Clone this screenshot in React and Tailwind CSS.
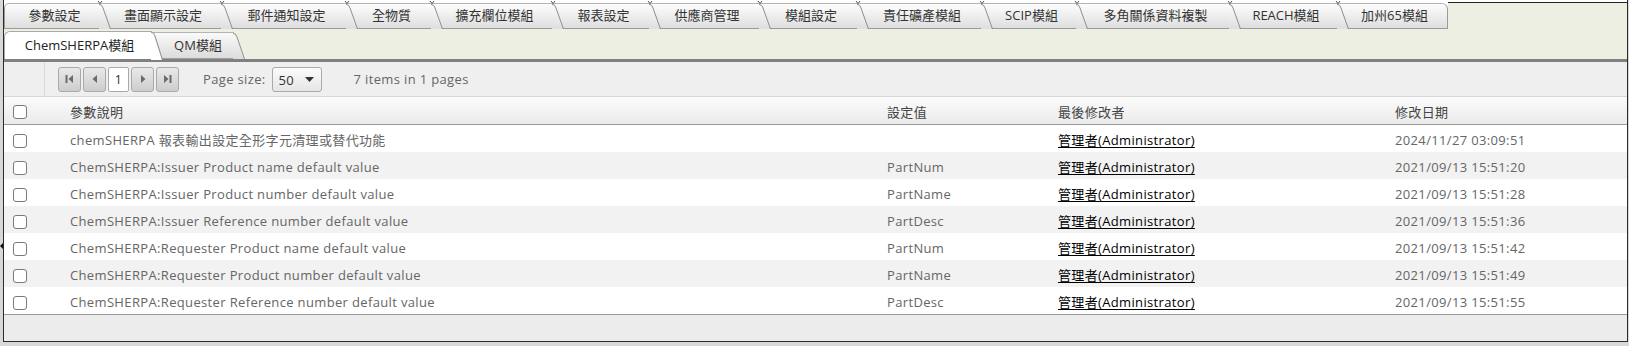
import React from 'react'

const topTabs = [
  { label: '參數設定', w: 'w-[96px]', first: true },
  { label: '畫面顯示設定', w: 'w-[122px]' },
  { label: '郵件通知設定', w: 'w-[125px]' },
  { label: '全物質', w: 'w-[85px]' },
  { label: '擴充欄位模組', w: 'w-[121px]' },
  { label: '報表設定', w: 'w-[97px]' },
  { label: '供應商管理', w: 'w-[110px]' },
  { label: '模組設定', w: 'w-[98px]' },
  { label: '責任礦產模組', w: 'w-[124px]' },
  { label: 'SCIP模組', w: 'w-[95px]' },
  { label: '多角關係資料複製', w: 'w-[153px]' },
  { label: 'REACH模組', w: 'w-[108px]' },
  { label: '加州65模組', w: 'w-[110px]', last: true },
]

const rows = [
  { desc: 'chemSHERPA 報表輸出設定全形字元清理或替代功能', val: '', date: '2024/11/27 03:09:51' },
  { desc: 'ChemSHERPA:Issuer Product name default value', val: 'PartNum', date: '2021/09/13 15:51:20' },
  { desc: 'ChemSHERPA:Issuer Product number default value', val: 'PartName', date: '2021/09/13 15:51:28' },
  { desc: 'ChemSHERPA:Issuer Reference number default value', val: 'PartDesc', date: '2021/09/13 15:51:36' },
  { desc: 'ChemSHERPA:Requester Product name default value', val: 'PartNum', date: '2021/09/13 15:51:42' },
  { desc: 'ChemSHERPA:Requester Product number default value', val: 'PartName', date: '2021/09/13 15:51:49' },
  { desc: 'ChemSHERPA:Requester Reference number default value', val: 'PartDesc', date: '2021/09/13 15:51:55' },
]

// slanted right edge of a tab, drawn over the next tab
const Slant = ({ h, id, top, bottom, white, tick }) => (
  <svg className="absolute left-full top-0 z-10 overflow-visible" width="12" height={h}>
    <defs>
      <linearGradient id={id} x1="0" y1="0" x2="0" y2="1">
        <stop offset="0" stopColor={white ? '#ffffff' : top} />
        <stop offset="1" stopColor={white ? '#ffffff' : bottom} />
      </linearGradient>
    </defs>
    <polygon points={`-1,0 0,0 10,${h} -1,${h}`} fill={`url(#${id})`} />
    <path d={`M-1 0.5 Q2 0 3 4 L10.5 ${h}`} fill="none" stroke="#8f8f8f" strokeWidth="1" />
    {tick && <path d="M-2 -3 L0 -0.5 L2 -3" fill="none" stroke="#4a5a40" strokeWidth="1" />}
  </svg>
)

const TopTab = ({ tab, i }) => (
  <div className={`relative ${tab.w} h-[26px] shrink-0 flex items-center justify-center border-t border-b border-t-[#b4b4b4] border-b-[#9a9a9a] bg-linear-to-b from-[#fdfdfd] to-[#dedede] text-[#333] ${tab.first ? 'border-l border-l-[#9a9a9a] rounded-tl-[5px]' : ''} ${tab.last ? 'border-r border-r-[#9a9a9a] rounded-tr-[6px]' : ''}`}>
    <span className="pl-[4px]">{tab.label}</span>
    {!tab.last && <Slant h={25} id={`tt${i}`} top="#fdfdfd" bottom="#dedede" tick />}
  </div>
)

const Checkbox = () => (
  <span className="block w-[14px] h-[14px] rounded-[3px] border border-[#7a7a7a] bg-white" />
)

const PagerBtn = ({ w, children }) => (
  <div className={`${w} h-[25px] flex items-center justify-center rounded-[3px] border border-[#aaaaaa] bg-linear-to-b from-[#e9e9e9] to-[#cdcdcd]`}>
    {children}
  </div>
)

const App = () => {
  return (
    <div className="relative w-[1629px] h-[346px] bg-[#d8d8d8] pl-[3px] pr-px pb-[4px] overflow-hidden font-['Open_Sans','Noto_Sans_CJK_TC',sans-serif] text-[13px]">
      {/* splitter handle */}
      <div className="absolute left-0 top-[243px] w-0 h-0 border-y-[3px] border-y-transparent border-r-[3px] border-r-[#111]" />

      <div className="h-full flex flex-col border-l border-r border-b border-[#2a2a2a]">
        {/* top tab strip */}
        <div className="h-[29px] shrink-0 flex bg-white">
          <div className="flex items-end">
            {topTabs.map((t, i) => <TopTab key={t.label} tab={t} i={i} />)}
          </div>
          <div className="flex-1 mt-[2px] border-t border-[#222] bg-[#eeefe3]" />
        </div>

        {/* module tab strip */}
        <div className="h-[30px] shrink-0 flex items-end bg-[#eeefe3]">
          <div className="relative w-[148px] h-[28px] flex items-center justify-center bg-white border-t border-l border-[#a9a9a9] rounded-tl-[6px] text-[#222]">
            <span className="pl-[2px]">ChemSHERPA模組</span>
            <Slant h={28} id="mt0" white />
          </div>
          <div className="relative w-[82px] h-[27px] flex items-center justify-center border-t border-b border-t-[#b4b4b4] border-b-[#a0a0a0] bg-linear-to-b from-[#fafafa] to-[#dcdcdc] text-[#333]">
            <span className="pl-[10px]">QM模組</span>
            <Slant h={26} id="mt1" top="#fafafa" bottom="#dcdcdc" />
          </div>
        </div>

        <div className="h-[3px] shrink-0 bg-[#808080]" />

        {/* grid */}
        <div className="flex-1 flex flex-col bg-white tracking-[0.35px]">
          {/* pager */}
          <div className="h-[35px] shrink-0 flex items-center bg-[#efefef] border-b border-[#d6d6d6]">
            <div className="w-[41px] h-full border-r border-[#d9d9d9]" />
            <div className="ml-[13px] flex items-center gap-[2px]">
              <PagerBtn w="w-[23px]">
                <svg width="9" height="10" viewBox="0 0 9 10"><rect x="0.5" y="1" width="2" height="8" fill="#6b6b6b" /><polygon points="8,1 3.5,5 8,9" fill="#6b6b6b" /></svg>
              </PagerBtn>
              <PagerBtn w="w-[23px]">
                <svg width="6" height="10" viewBox="0 0 6 10"><polygon points="5,1 0.5,5 5,9" fill="#6b6b6b" /></svg>
              </PagerBtn>
              <div className="w-[21px] h-[25px] flex items-center justify-center pt-[2px] border border-[#aaaaaa] rounded-[2px] bg-white text-[#333]">1</div>
              <PagerBtn w="w-[23px]">
                <svg width="6" height="10" viewBox="0 0 6 10"><polygon points="1,1 5.5,5 1,9" fill="#6b6b6b" /></svg>
              </PagerBtn>
              <PagerBtn w="w-[23px]">
                <svg width="9" height="10" viewBox="0 0 9 10"><polygon points="1,1 5.5,5 1,9" fill="#6b6b6b" /><rect x="6.5" y="1" width="2" height="8" fill="#6b6b6b" /></svg>
              </PagerBtn>
            </div>
            <span className="ml-[24px] pt-[2px] text-[#666]">Page size:</span>
            <div className="ml-[6px] w-[50px] h-[25px] flex items-center justify-between pl-[6px] pr-[7px] rounded-[3px] border border-[#aaaaaa] bg-linear-to-b from-[#fbfbfb] to-[#e6e6e6] text-[#333]">
              <span className="pt-[3px]">50</span>
              <svg width="9" height="5" viewBox="0 0 9 5"><polygon points="0,0 9,0 4.5,5" fill="#333" /></svg>
            </div>
            <span className="ml-[32px] pt-[2px] text-[#666]">7 items in 1 pages</span>
          </div>

          {/* header */}
          <div className="h-[28px] shrink-0 flex items-center pt-[2px] border-b border-[#9a9a9a] bg-linear-to-b from-[#fbfbfb] to-[#ebebeb] text-[#444]">
            <div className="w-[41px] pl-[9px]"><Checkbox /></div>
            <div className="w-[817px] pl-[25px] pt-[3px]">參數說明</div>
            <div className="w-[171px] pl-[25px] pt-[3px]">設定值</div>
            <div className="w-[337px] pl-[25px] pt-[3px]">最後修改者</div>
            <div className="flex-1 pl-[25px] pt-[3px]">修改日期</div>
          </div>

          {/* rows */}
          {rows.map((r, i) => (
            <div key={i} className={`h-[27px] shrink-0 flex items-center pt-[4px] ${i % 2 === 1 ? 'bg-[#f2f2f2]' : 'bg-white'}`}>
              <div className="w-[41px] pl-[9px]"><Checkbox /></div>
              <div className="w-[817px] pl-[25px] text-[#666]">{r.desc}</div>
              <div className="w-[171px] pl-[25px] text-[#666]">{r.val}</div>
              <div className="w-[337px] pl-[25px]">
                <a className="text-black underline underline-offset-2">管理者(Administrator)</a>
              </div>
              <div className="flex-1 pl-[25px] text-[#666]">{r.date}</div>
            </div>
          ))}

          {/* footer */}
          <div className="flex-1 bg-[#ececec] border-t border-[#9a9a9a]" />
        </div>
      </div>
    </div>
  )
}

export default App
